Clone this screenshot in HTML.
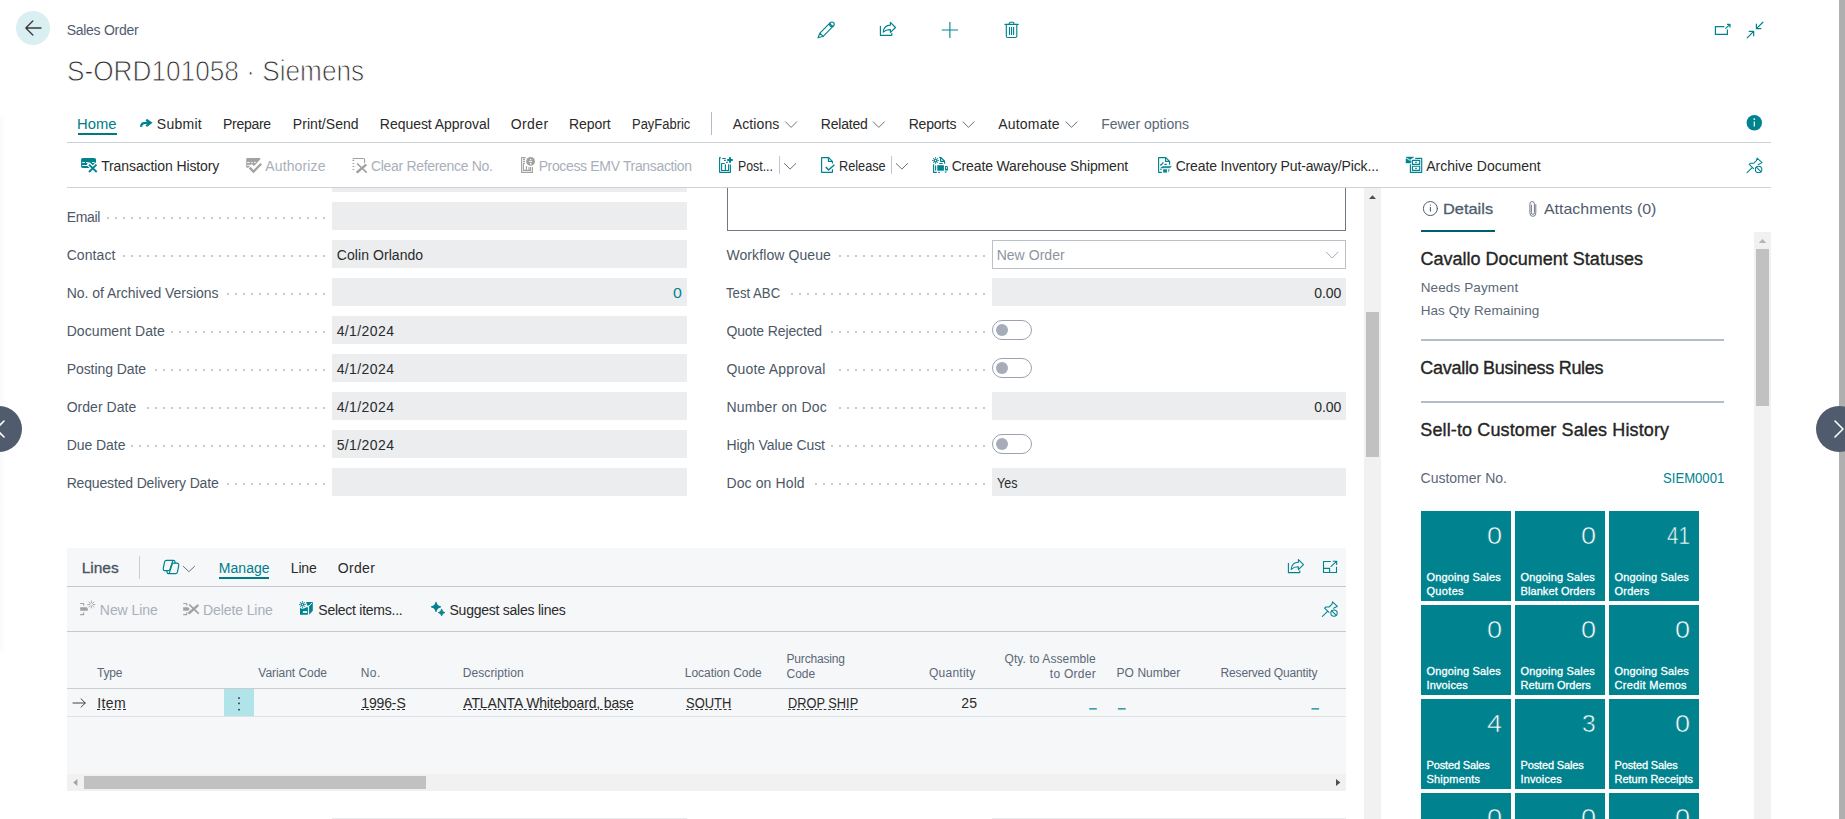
<!DOCTYPE html>
<html lang="en"><head><meta charset="utf-8"><title>S-ORD101058 · Siemens - Sales Order</title>
<style>
html,body{margin:0;padding:0;background:#fff;}
body{width:1845px;height:819px;position:relative;overflow:hidden;font-family:'Liberation Sans', sans-serif;}
.t{position:absolute;white-space:nowrap;}
.b{position:absolute;}
.tile{position:absolute;width:90px;height:90px;background:#00838f;}
.dots{background-image:linear-gradient(to left,#c7cad2 2px,transparent 2px);background-size:8px 2px;background-position:right top;}
svg.ov{position:absolute;left:0;top:0;}
</style></head>
<body>
<div class="b" style="left:1839px;top:0px;width:6px;height:819px;background:#aeafae;"></div>
<div class="b" style="left:0px;top:117px;width:5px;height:535px;background:#fff;background:linear-gradient(to right,#fafafa,#fefefe);"></div>
<div class="b" style="left:16px;top:11px;width:34px;height:34px;background:#d9eff2;border-radius:50%;"></div>
<div class="b" style="left:67px;top:142px;width:1704px;height:1px;background:#c9d3d8;"></div>
<div class="b" style="left:67px;top:187px;width:1704px;height:1px;background:#cfd3d8;"></div>
<div class="b" style="left:711.2px;top:112px;width:1px;height:23px;background:#b4bbc6;"></div>
<div class="b" style="left:78px;top:133px;width:38.5px;height:2px;background:#007987;"></div>
<div class="b" style="left:778.5px;top:156px;width:1px;height:18px;background:#c4c8ce;"></div>
<div class="b" style="left:890.5px;top:156px;width:1px;height:18px;background:#c4c8ce;"></div>
<div class="b" style="left:332px;top:188px;width:355px;height:4px;background:#ecedef;"></div>
<div class="b" style="left:332px;top:202px;width:355px;height:28.3px;background:#ecedef;"></div>
<div class="b" style="left:332px;top:240px;width:355px;height:28.3px;background:#ecedef;"></div>
<div class="b" style="left:332px;top:278px;width:355px;height:28.3px;background:#ecedef;"></div>
<div class="b" style="left:332px;top:316px;width:355px;height:28.3px;background:#ecedef;"></div>
<div class="b" style="left:332px;top:354px;width:355px;height:28.3px;background:#ecedef;"></div>
<div class="b" style="left:332px;top:392px;width:355px;height:28.3px;background:#ecedef;"></div>
<div class="b" style="left:332px;top:430px;width:355px;height:28.3px;background:#ecedef;"></div>
<div class="b" style="left:332px;top:468px;width:355px;height:28.3px;background:#ecedef;"></div>
<div class="b" style="left:992px;top:278px;width:354px;height:28.3px;background:#ecedef;"></div>
<div class="b" style="left:992px;top:392px;width:354px;height:28.3px;background:#ecedef;"></div>
<div class="b" style="left:992px;top:468px;width:354px;height:28.3px;background:#ecedef;"></div>
<div class="b" style="left:727px;top:188px;width:619px;height:42.5px;background:#fff;border:1px solid #6f7785;border-top:none;box-sizing:border-box;"></div>
<div class="b" style="left:992px;top:240px;width:354px;height:28.5px;background:#fff;border:1px solid #bcc1c9;box-sizing:border-box;"></div>
<div class="b" style="left:992px;top:320px;width:40px;height:20px;background:#fff;border:1px solid #9aa2af;border-radius:10px;box-sizing:border-box;"></div>
<div class="b" style="left:996px;top:324px;width:12px;height:12px;background:#a6acb9;border-radius:50%;"></div>
<div class="b" style="left:992px;top:358px;width:40px;height:20px;background:#fff;border:1px solid #9aa2af;border-radius:10px;box-sizing:border-box;"></div>
<div class="b" style="left:996px;top:362px;width:12px;height:12px;background:#a6acb9;border-radius:50%;"></div>
<div class="b" style="left:992px;top:434px;width:40px;height:20px;background:#fff;border:1px solid #9aa2af;border-radius:10px;box-sizing:border-box;"></div>
<div class="b" style="left:996px;top:438px;width:12px;height:12px;background:#a6acb9;border-radius:50%;"></div>
<div class="b" style="left:332px;top:818px;width:355px;height:1px;background:#e9eaec;"></div>
<div class="b" style="left:992px;top:818px;width:354px;height:1px;background:#e9eaec;"></div>
<div class="b dots" style="left:107px;top:217px;width:218px;height:2px"></div>
<div class="b dots" style="left:123px;top:255px;width:202px;height:2px"></div>
<div class="b dots" style="left:227px;top:293px;width:98px;height:2px"></div>
<div class="b dots" style="left:171px;top:331px;width:154px;height:2px"></div>
<div class="b dots" style="left:155px;top:369px;width:170px;height:2px"></div>
<div class="b dots" style="left:147px;top:407px;width:178px;height:2px"></div>
<div class="b dots" style="left:131px;top:445px;width:194px;height:2px"></div>
<div class="b dots" style="left:227px;top:483px;width:98px;height:2px"></div>
<div class="b dots" style="left:839px;top:255px;width:146px;height:2px"></div>
<div class="b dots" style="left:791px;top:293px;width:194px;height:2px"></div>
<div class="b dots" style="left:831px;top:331px;width:154px;height:2px"></div>
<div class="b dots" style="left:839px;top:369px;width:146px;height:2px"></div>
<div class="b dots" style="left:839px;top:407px;width:146px;height:2px"></div>
<div class="b dots" style="left:831px;top:445px;width:154px;height:2px"></div>
<div class="b dots" style="left:815px;top:483px;width:170px;height:2px"></div>
<div class="b" style="left:1364px;top:188px;width:17px;height:631px;background:#f1f1f1;"></div>
<div class="b" style="left:1366px;top:312px;width:13px;height:145px;background:#c1c1c1;"></div>
<div class="b" style="left:67px;top:548px;width:1279px;height:243px;background:#f5f7f9;"></div>
<div class="b" style="left:139px;top:556px;width:1px;height:23px;background:#c8ccd3;"></div>
<div class="b" style="left:219px;top:577px;width:50px;height:2px;background:#007987;"></div>
<div class="b" style="left:67px;top:586px;width:1279px;height:1px;background:#c5c9cf;"></div>
<div class="b" style="left:67px;top:631px;width:1279px;height:1px;background:#c5c9cf;"></div>
<div class="b" style="left:67px;top:688px;width:1279px;height:1px;background:#c9cdd2;"></div>
<div class="b" style="left:67px;top:716px;width:1279px;height:1px;background:#dfe2e6;"></div>
<div class="b" style="left:224px;top:689px;width:30px;height:27px;background:#b1e4e9;"></div>
<div class="b" style="left:67px;top:774px;width:1279px;height:17px;background:#f1f1f1;"></div>
<div class="b" style="left:84px;top:776px;width:342px;height:13px;background:#c1c1c1;"></div>
<div class="b" style="left:1421px;top:230px;width:74px;height:2px;background:#005f6b;"></div>
<div class="b" style="left:1754px;top:232px;width:17px;height:587px;background:#f1f1f1;"></div>
<div class="b" style="left:1756px;top:249px;width:13px;height:157px;background:#c1c1c1;"></div>
<div class="b" style="left:1421px;top:339px;width:303px;height:2px;background:#b3bcc7;"></div>
<div class="b" style="left:1421px;top:401px;width:303px;height:2px;background:#b3bcc7;"></div>
<div class="b" style="left:-24px;top:406px;width:46px;height:46px;background:#505c6d;border-radius:50%;"></div>
<div class="b" style="left:1816px;top:406px;width:46px;height:46px;background:#505c6d;border-radius:50%;"></div>
<div class="tile" style="left:1421px;top:511px"></div>
<div class="tile" style="left:1515px;top:511px"></div>
<div class="tile" style="left:1609px;top:511px"></div>
<div class="tile" style="left:1421px;top:605px"></div>
<div class="tile" style="left:1515px;top:605px"></div>
<div class="tile" style="left:1609px;top:605px"></div>
<div class="tile" style="left:1421px;top:699px"></div>
<div class="tile" style="left:1515px;top:699px"></div>
<div class="tile" style="left:1609px;top:699px"></div>
<div class="tile" style="left:1421px;top:793px"></div>
<div class="tile" style="left:1515px;top:793px"></div>
<div class="tile" style="left:1609px;top:793px"></div>
<span class="t" style="left:66.63px;top:19.80px;font-size:14px;line-height:20px;color:#505c6d;letter-spacing:-0.276px;">Sales Order</span>
<span class="t" style="left:66.86px;top:53.00px;font-size:29px;line-height:36px;color:#303030;-webkit-text-stroke:0.9px #fff;transform:scaleX(0.9038);transform-origin:0 0;">S-ORD101058 · Siemens</span>
<span class="t" style="left:77.39px;top:114.20px;font-size:14px;line-height:20px;color:#007d8a;transform:scaleX(1.0553);transform-origin:0 0;">Home</span>
<span class="t" style="left:156.83px;top:114.20px;font-size:14px;line-height:20px;color:#2a2a2a;letter-spacing:0.272px;">Submit</span>
<span class="t" style="left:223.03px;top:114.20px;font-size:14px;line-height:20px;color:#2a2a2a;letter-spacing:-0.279px;">Prepare</span>
<span class="t" style="left:292.83px;top:114.20px;font-size:14px;line-height:20px;color:#2a2a2a;letter-spacing:0.041px;">Print/Send</span>
<span class="t" style="left:379.83px;top:114.20px;font-size:14px;line-height:20px;color:#2a2a2a;letter-spacing:-0.039px;">Request Approval</span>
<span class="t" style="left:510.83px;top:114.20px;font-size:14px;line-height:20px;color:#2a2a2a;letter-spacing:0.361px;">Order</span>
<span class="t" style="left:568.93px;top:114.20px;font-size:14px;line-height:20px;color:#2a2a2a;letter-spacing:-0.038px;">Report</span>
<span class="t" style="left:632.09px;top:114.20px;font-size:14px;line-height:20px;color:#2a2a2a;transform:scaleX(0.9253);transform-origin:0 0;">PayFabric</span>
<span class="t" style="left:732.83px;top:114.20px;font-size:14px;line-height:20px;color:#2a2a2a;letter-spacing:0.086px;">Actions</span>
<span class="t" style="left:820.83px;top:114.20px;font-size:14px;line-height:20px;color:#2a2a2a;letter-spacing:-0.221px;">Related</span>
<span class="t" style="left:908.63px;top:114.20px;font-size:14px;line-height:20px;color:#2a2a2a;letter-spacing:-0.182px;">Reports</span>
<span class="t" style="left:998.23px;top:114.20px;font-size:14px;line-height:20px;color:#2a2a2a;letter-spacing:0.200px;">Automate</span>
<span class="t" style="left:1101.23px;top:114.20px;font-size:14px;line-height:20px;color:#5b6776;letter-spacing:-0.016px;">Fewer options</span>
<span class="t" style="left:101.13px;top:156.00px;font-size:14px;line-height:20px;color:#2a2a2a;letter-spacing:-0.102px;">Transaction History</span>
<span class="t" style="left:265.23px;top:156.00px;font-size:14px;line-height:20px;color:#a9afba;letter-spacing:0.148px;">Authorize</span>
<span class="t" style="left:370.93px;top:156.00px;font-size:14px;line-height:20px;color:#a9afba;letter-spacing:-0.310px;">Clear Reference No.</span>
<span class="t" style="left:538.63px;top:156.00px;font-size:14px;line-height:20px;color:#a9afba;letter-spacing:-0.346px;">Process EMV Transaction</span>
<span class="t" style="left:737.52px;top:156.00px;font-size:14px;line-height:20px;color:#2a2a2a;transform:scaleX(0.8808);transform-origin:0 0;">Post...</span>
<span class="t" style="left:838.50px;top:156.00px;font-size:14px;line-height:20px;color:#2a2a2a;transform:scaleX(0.9090);transform-origin:0 0;">Release</span>
<span class="t" style="left:951.63px;top:156.00px;font-size:14px;line-height:20px;color:#2a2a2a;letter-spacing:-0.141px;">Create Warehouse Shipment</span>
<span class="t" style="left:1175.63px;top:156.00px;font-size:14px;line-height:20px;color:#2a2a2a;letter-spacing:-0.141px;">Create Inventory Put-away/Pick...</span>
<span class="t" style="left:1426.13px;top:156.00px;font-size:14px;line-height:20px;color:#2a2a2a;letter-spacing:0.010px;">Archive Document</span>
<span class="t" style="left:66.63px;top:207.00px;font-size:14px;line-height:20px;color:#4c5866;letter-spacing:-0.319px;">Email</span>
<span class="t" style="left:66.63px;top:245.00px;font-size:14px;line-height:20px;color:#4c5866;letter-spacing:0.098px;">Contact</span>
<span class="t" style="left:66.63px;top:283.00px;font-size:14px;line-height:20px;color:#4c5866;letter-spacing:-0.026px;">No. of Archived Versions</span>
<span class="t" style="left:66.63px;top:321.00px;font-size:14px;line-height:20px;color:#4c5866;letter-spacing:0.080px;">Document Date</span>
<span class="t" style="left:66.63px;top:359.00px;font-size:14px;line-height:20px;color:#4c5866;letter-spacing:-0.057px;">Posting Date</span>
<span class="t" style="left:66.63px;top:397.00px;font-size:14px;line-height:20px;color:#4c5866;letter-spacing:0.043px;">Order Date</span>
<span class="t" style="left:66.63px;top:435.00px;font-size:14px;line-height:20px;color:#4c5866;letter-spacing:-0.045px;">Due Date</span>
<span class="t" style="left:66.63px;top:473.00px;font-size:14px;line-height:20px;color:#4c5866;letter-spacing:-0.159px;">Requested Delivery Date</span>
<span class="t" style="left:726.43px;top:245.00px;font-size:14px;line-height:20px;color:#4c5866;letter-spacing:0.093px;">Workflow Queue</span>
<span class="t" style="left:726.48px;top:283.00px;font-size:14px;line-height:20px;color:#4c5866;transform:scaleX(0.9402);transform-origin:0 0;">Test ABC</span>
<span class="t" style="left:726.43px;top:321.00px;font-size:14px;line-height:20px;color:#4c5866;letter-spacing:-0.120px;">Quote Rejected</span>
<span class="t" style="left:726.43px;top:359.00px;font-size:14px;line-height:20px;color:#4c5866;letter-spacing:0.194px;">Quote Approval</span>
<span class="t" style="left:726.43px;top:397.00px;font-size:14px;line-height:20px;color:#4c5866;letter-spacing:0.183px;">Number on Doc</span>
<span class="t" style="left:726.43px;top:435.00px;font-size:14px;line-height:20px;color:#4c5866;letter-spacing:-0.114px;">High Value Cust</span>
<span class="t" style="left:726.43px;top:473.00px;font-size:14px;line-height:20px;color:#4c5866;letter-spacing:0.119px;">Doc on Hold</span>
<span class="t" style="left:336.83px;top:245.00px;font-size:14px;line-height:20px;color:#2a2a2a;letter-spacing:0.061px;">Colin Orlando</span>
<span class="t" style="left:672.63px;top:283.00px;font-size:14px;line-height:20px;color:#00838f;transform:scaleX(1.1348);transform-origin:0 0;">0</span>
<span class="t" style="left:336.63px;top:321.00px;font-size:14px;line-height:20px;color:#2a2a2a;letter-spacing:0.406px;">4/1/2024</span>
<span class="t" style="left:336.63px;top:359.00px;font-size:14px;line-height:20px;color:#2a2a2a;letter-spacing:0.406px;">4/1/2024</span>
<span class="t" style="left:336.63px;top:397.00px;font-size:14px;line-height:20px;color:#2a2a2a;letter-spacing:0.406px;">4/1/2024</span>
<span class="t" style="left:336.63px;top:435.00px;font-size:14px;line-height:20px;color:#2a2a2a;letter-spacing:0.406px;">5/1/2024</span>
<span class="t" style="left:996.63px;top:245.00px;font-size:14px;line-height:20px;color:#8e949e;letter-spacing:0.044px;">New Order</span>
<span class="t" style="left:1314.33px;top:283.00px;font-size:14px;line-height:20px;color:#2a2a2a;letter-spacing:-0.137px;">0.00</span>
<span class="t" style="left:1314.33px;top:397.00px;font-size:14px;line-height:20px;color:#2a2a2a;letter-spacing:-0.137px;">0.00</span>
<span class="t" style="left:996.51px;top:473.00px;font-size:14px;line-height:20px;color:#2a2a2a;transform:scaleX(0.8919);transform-origin:0 0;">Yes</span>
<span class="t" style="left:81.75px;top:557.70px;font-size:15.5px;line-height:20px;color:#4a5361;-webkit-text-stroke:0.3px #4a5361;letter-spacing:-0.039px;">Lines</span>
<span class="t" style="left:218.83px;top:558.20px;font-size:14px;line-height:20px;color:#007d8a;letter-spacing:0.029px;">Manage</span>
<span class="t" style="left:290.83px;top:558.20px;font-size:14px;line-height:20px;color:#2a2a2a;letter-spacing:-0.176px;">Line</span>
<span class="t" style="left:337.63px;top:558.20px;font-size:14px;line-height:20px;color:#2a2a2a;letter-spacing:0.361px;">Order</span>
<span class="t" style="left:99.83px;top:599.80px;font-size:14px;line-height:20px;color:#a9afba;letter-spacing:-0.062px;">New Line</span>
<span class="t" style="left:203.03px;top:599.80px;font-size:14px;line-height:20px;color:#a9afba;letter-spacing:-0.099px;">Delete Line</span>
<span class="t" style="left:318.33px;top:599.80px;font-size:14px;line-height:20px;color:#2a2a2a;letter-spacing:-0.256px;">Select items...</span>
<span class="t" style="left:449.53px;top:599.80px;font-size:14px;line-height:20px;color:#2a2a2a;letter-spacing:-0.244px;">Suggest sales lines</span>
<span class="t" style="left:97.04px;top:662.80px;font-size:12px;line-height:20px;color:#5b6776;letter-spacing:-0.232px;">Type</span>
<span class="t" style="left:258.34px;top:662.80px;font-size:12px;line-height:20px;color:#5b6776;letter-spacing:-0.049px;">Variant Code</span>
<span class="t" style="left:360.84px;top:662.80px;font-size:12px;line-height:20px;color:#5b6776;letter-spacing:0.366px;">No.</span>
<span class="t" style="left:462.74px;top:662.80px;font-size:12px;line-height:20px;color:#5b6776;letter-spacing:0.089px;">Description</span>
<span class="t" style="left:684.74px;top:662.80px;font-size:12px;line-height:20px;color:#5b6776;letter-spacing:-0.031px;">Location Code</span>
<span class="t" style="left:786.54px;top:649.00px;font-size:12px;line-height:20px;color:#5b6776;letter-spacing:-0.170px;">Purchasing</span>
<span class="t" style="left:786.54px;top:664.40px;font-size:12px;line-height:20px;color:#5b6776;letter-spacing:-0.022px;">Code</span>
<span class="t" style="left:929.04px;top:662.80px;font-size:12px;line-height:20px;color:#5b6776;letter-spacing:0.231px;">Quantity</span>
<span class="t" style="left:1004.54px;top:649.00px;font-size:12px;line-height:20px;color:#5b6776;letter-spacing:0.087px;">Qty. to Assemble</span>
<span class="t" style="left:1049.84px;top:664.40px;font-size:12px;line-height:20px;color:#5b6776;letter-spacing:0.258px;">to Order</span>
<span class="t" style="left:1116.54px;top:662.80px;font-size:12px;line-height:20px;color:#5b6776;letter-spacing:0.058px;">PO Number</span>
<span class="t" style="left:1220.54px;top:662.80px;font-size:12px;line-height:20px;color:#5b6776;letter-spacing:-0.154px;">Reserved Quantity</span>
<span class="t" style="left:97.23px;top:692.90px;font-size:14px;line-height:20px;color:#2a2a2a;text-decoration:underline dashed;text-decoration-thickness:1px;text-underline-offset:1px;letter-spacing:0.435px;">Item</span>
<span class="t" style="left:361.23px;top:692.90px;font-size:14px;line-height:20px;color:#2a2a2a;text-decoration:underline dashed;text-decoration-thickness:1px;text-underline-offset:1px;letter-spacing:-0.123px;">1996-S</span>
<span class="t" style="left:463.23px;top:692.90px;font-size:14px;line-height:20px;color:#2a2a2a;text-decoration:underline dashed;text-decoration-thickness:1px;text-underline-offset:1px;letter-spacing:-0.142px;">ATLANTA Whiteboard, base</span>
<span class="t" style="left:685.59px;top:692.90px;font-size:14px;line-height:20px;color:#2a2a2a;text-decoration:underline dashed;text-decoration-thickness:1px;text-underline-offset:1px;transform:scaleX(0.9250);transform-origin:0 0;">SOUTH</span>
<span class="t" style="left:787.50px;top:692.90px;font-size:14px;line-height:20px;color:#2a2a2a;text-decoration:underline dashed;text-decoration-thickness:1px;text-underline-offset:1px;transform:scaleX(0.9146);transform-origin:0 0;">DROP SHIP</span>
<span class="t" style="left:961.33px;top:692.90px;font-size:14px;line-height:20px;color:#2a2a2a;letter-spacing:0.062px;">25</span>
<span class="t" style="left:1442.80px;top:199.20px;font-size:15px;line-height:20px;color:#505c6d;-webkit-text-stroke:0.3px #505c6d;transform:scaleX(1.0925);transform-origin:0 0;">Details</span>
<span class="t" style="left:1543.92px;top:199.20px;font-size:15px;line-height:20px;color:#505c6d;transform:scaleX(1.0612);transform-origin:0 0;">Attachments (0)</span>
<span class="t" style="left:1420.41px;top:246.60px;font-size:18px;line-height:24px;color:#252525;-webkit-text-stroke:0.35px #252525;letter-spacing:0.020px;">Cavallo Document Statuses</span>
<span class="t" style="left:1420.66px;top:277.50px;font-size:13.5px;line-height:20px;color:#5c6878;letter-spacing:0.119px;">Needs Payment</span>
<span class="t" style="left:1420.66px;top:300.50px;font-size:13.5px;line-height:20px;color:#5c6878;letter-spacing:0.102px;">Has Qty Remaining</span>
<span class="t" style="left:1420.31px;top:355.80px;font-size:18px;line-height:24px;color:#252525;-webkit-text-stroke:0.35px #252525;letter-spacing:-0.277px;">Cavallo Business Rules</span>
<span class="t" style="left:1420.31px;top:417.80px;font-size:18px;line-height:24px;color:#252525;-webkit-text-stroke:0.35px #252525;letter-spacing:0.128px;">Sell-to Customer Sales History</span>
<span class="t" style="left:1420.53px;top:468.30px;font-size:14px;line-height:20px;color:#5c6878;letter-spacing:0.007px;">Customer No.</span>
<span class="t" style="left:1662.58px;top:468.30px;font-size:14px;line-height:20px;color:#00838f;transform:scaleX(0.9368);transform-origin:0 0;">SIEM0001</span>
<span class="t" style="left:1487.21px;top:522.10px;font-size:23.5px;line-height:28px;color:#fff;-webkit-text-stroke:0.55px #00838f;transform:scaleX(1.1531);transform-origin:0 0;">0</span>
<span class="t" style="left:1426.49px;top:570.20px;font-size:11px;line-height:14px;color:#fff;-webkit-text-stroke:0.3px #fff;letter-spacing:0.178px;">Ongoing Sales</span>
<span class="t" style="left:1426.49px;top:584.20px;font-size:11px;line-height:14px;color:#fff;-webkit-text-stroke:0.3px #fff;letter-spacing:0.328px;">Quotes</span>
<span class="t" style="left:1581.21px;top:522.10px;font-size:23.5px;line-height:28px;color:#fff;-webkit-text-stroke:0.55px #00838f;transform:scaleX(1.1531);transform-origin:0 0;">0</span>
<span class="t" style="left:1520.49px;top:570.20px;font-size:11px;line-height:14px;color:#fff;-webkit-text-stroke:0.3px #fff;letter-spacing:0.178px;">Ongoing Sales</span>
<span class="t" style="left:1520.49px;top:584.20px;font-size:11px;line-height:14px;color:#fff;-webkit-text-stroke:0.3px #fff;letter-spacing:0.087px;">Blanket Orders</span>
<span class="t" style="left:1666.96px;top:522.10px;font-size:23.5px;line-height:28px;color:#fff;-webkit-text-stroke:0.55px #00838f;transform:scaleX(0.8788);transform-origin:0 0;">41</span>
<span class="t" style="left:1614.49px;top:570.20px;font-size:11px;line-height:14px;color:#fff;-webkit-text-stroke:0.3px #fff;letter-spacing:0.178px;">Ongoing Sales</span>
<span class="t" style="left:1614.49px;top:584.20px;font-size:11px;line-height:14px;color:#fff;-webkit-text-stroke:0.3px #fff;letter-spacing:0.217px;">Orders</span>
<span class="t" style="left:1487.21px;top:616.10px;font-size:23.5px;line-height:28px;color:#fff;-webkit-text-stroke:0.55px #00838f;transform:scaleX(1.1531);transform-origin:0 0;">0</span>
<span class="t" style="left:1426.49px;top:664.20px;font-size:11px;line-height:14px;color:#fff;-webkit-text-stroke:0.3px #fff;letter-spacing:0.178px;">Ongoing Sales</span>
<span class="t" style="left:1426.49px;top:678.20px;font-size:11px;line-height:14px;color:#fff;-webkit-text-stroke:0.3px #fff;letter-spacing:0.136px;">Invoices</span>
<span class="t" style="left:1581.21px;top:616.10px;font-size:23.5px;line-height:28px;color:#fff;-webkit-text-stroke:0.55px #00838f;transform:scaleX(1.1531);transform-origin:0 0;">0</span>
<span class="t" style="left:1520.49px;top:664.20px;font-size:11px;line-height:14px;color:#fff;-webkit-text-stroke:0.3px #fff;letter-spacing:0.178px;">Ongoing Sales</span>
<span class="t" style="left:1520.49px;top:678.20px;font-size:11px;line-height:14px;color:#fff;-webkit-text-stroke:0.3px #fff;letter-spacing:0.051px;">Return Orders</span>
<span class="t" style="left:1675.21px;top:616.10px;font-size:23.5px;line-height:28px;color:#fff;-webkit-text-stroke:0.55px #00838f;transform:scaleX(1.1531);transform-origin:0 0;">0</span>
<span class="t" style="left:1614.49px;top:664.20px;font-size:11px;line-height:14px;color:#fff;-webkit-text-stroke:0.3px #fff;letter-spacing:0.178px;">Ongoing Sales</span>
<span class="t" style="left:1614.49px;top:678.20px;font-size:11px;line-height:14px;color:#fff;-webkit-text-stroke:0.3px #fff;letter-spacing:0.331px;">Credit Memos</span>
<span class="t" style="left:1487.21px;top:710.10px;font-size:23.5px;line-height:28px;color:#fff;-webkit-text-stroke:0.55px #00838f;transform:scaleX(1.1531);transform-origin:0 0;">4</span>
<span class="t" style="left:1426.49px;top:758.20px;font-size:11px;line-height:14px;color:#fff;-webkit-text-stroke:0.3px #fff;letter-spacing:-0.138px;">Posted Sales</span>
<span class="t" style="left:1426.49px;top:772.20px;font-size:11px;line-height:14px;color:#fff;-webkit-text-stroke:0.3px #fff;letter-spacing:0.203px;">Shipments</span>
<span class="t" style="left:1582.45px;top:710.10px;font-size:23.5px;line-height:28px;color:#fff;-webkit-text-stroke:0.55px #00838f;transform:scaleX(1.0483);transform-origin:0 0;">3</span>
<span class="t" style="left:1520.49px;top:758.20px;font-size:11px;line-height:14px;color:#fff;-webkit-text-stroke:0.3px #fff;letter-spacing:-0.138px;">Posted Sales</span>
<span class="t" style="left:1520.49px;top:772.20px;font-size:11px;line-height:14px;color:#fff;-webkit-text-stroke:0.3px #fff;letter-spacing:0.136px;">Invoices</span>
<span class="t" style="left:1675.21px;top:710.10px;font-size:23.5px;line-height:28px;color:#fff;-webkit-text-stroke:0.55px #00838f;transform:scaleX(1.1531);transform-origin:0 0;">0</span>
<span class="t" style="left:1614.49px;top:758.20px;font-size:11px;line-height:14px;color:#fff;-webkit-text-stroke:0.3px #fff;letter-spacing:-0.138px;">Posted Sales</span>
<span class="t" style="left:1614.49px;top:772.20px;font-size:11px;line-height:14px;color:#fff;-webkit-text-stroke:0.3px #fff;letter-spacing:-0.019px;">Return Receipts</span>
<span class="t" style="left:1487.21px;top:804.10px;font-size:23.5px;line-height:28px;color:#fff;-webkit-text-stroke:0.55px #00838f;transform:scaleX(1.1531);transform-origin:0 0;">0</span>
<span class="t" style="left:1581.21px;top:804.10px;font-size:23.5px;line-height:28px;color:#fff;-webkit-text-stroke:0.55px #00838f;transform:scaleX(1.1531);transform-origin:0 0;">0</span>
<span class="t" style="left:1675.21px;top:804.10px;font-size:23.5px;line-height:28px;color:#fff;-webkit-text-stroke:0.55px #00838f;transform:scaleX(1.1531);transform-origin:0 0;">0</span>
<svg class="ov" width="1845" height="819" viewBox="0 0 1845 819" fill="none" stroke-linecap="round" stroke-linejoin="round">
<!-- back arrow -->
<path d="M41 28H25.8M32.8 21l-7 7 7 7" stroke="#3a3a3a" stroke-width="1.3"/>
<!-- nav chevrons -->
<path d="M4 421l-8 8 8 8" stroke="#fff" stroke-width="1.6"/>
<path d="M1835 421l8 8-8 8" stroke="#fff" stroke-width="1.6"/>
<!-- top center icons -->
<g stroke="#00838f" stroke-width="1.15">
 <!-- pencil -->
 <path d="M819.9 33.1L829.8 23.2M823.2 36.3L832.9 26.4M819.9 33.1L818 37.8L823.2 36.3M819.9 33.1L823.2 36.3M829.6 23.4L832.8 26.6"/>
 <circle cx="831.9" cy="24.3" r="2.3"/>
 <!-- share -->
 <path d="M880.4 26.2V35.3H891.8V33.4"/>
 <path d="M883.2 32.2C883.6 27.6 886.6 25.3 890.4 25.1V22.4L895.5 27.5L890.4 32.4V29.6C887.4 29.5 885.2 30.2 883.2 32.2Z"/>
 <!-- plus -->
 <path d="M941.8 30H958M949.9 22V38" stroke-width="1.1" stroke-linecap="butt"/>
 <!-- trash -->
 <path d="M1005 24.4H1018.2M1009.3 24.4V23.2Q1009.3 22.2 1010.3 22.2H1012.9Q1013.9 22.2 1013.9 23.2V24.4M1006.3 24.4V36Q1006.3 37.5 1007.8 37.5H1015.3Q1016.8 37.5 1016.8 36V24.4M1009.5 27.2V34.6M1011.55 27.2V34.6M1013.6 27.2V34.6"/>
 <!-- popout -->
 <path d="M1724.4 26.6H1715.4V34.4H1727.4V29.6M1725.4 28.6L1729.8 24.6M1727 24.4H1730V27.4" stroke-width="1.2" stroke-linecap="butt"/>
 <!-- collapse -->
 <path d="M1762.9 22.2L1756.4 28.6M1756.4 24.2V28.7H1760.8M1747.2 37.8L1753.6 31.4M1749.2 31.3H1753.7V35.8" stroke-width="1.2"/>
</g>
<!-- info filled -->
<circle cx="1754.3" cy="122.7" r="7.7" fill="#00838f"/>
<path d="M1754.3 121.6V126.4" stroke="#fff" stroke-width="1.2" stroke-linecap="butt"/>
<circle cx="1754.3" cy="119.1" r="0.95" fill="#fff"/>
<!-- submit arrow -->
<path d="M141.2 126.9C141 123.9 142.8 122.9 146 122.9H150" stroke="#00838f" stroke-width="2.3" stroke-linecap="butt"/>
<path d="M146.2 119.8L150.6 122.9L146.2 126.2" stroke="#00838f" stroke-width="2.3" stroke-linecap="butt" stroke-linejoin="miter"/>
<!-- menu chevrons -->
<g stroke="#6b7380" stroke-width="1">
 <path d="M785.5 121.8l5.6 5.6 5.6-5.6M873.2 121.8l5.6 5.6 5.6-5.6M962.9 121.8l5.6 5.6 5.6-5.6M1065.9 121.8l5.6 5.6 5.6-5.6"/>
 <path d="M784.4 163.5l5.7 5.6 5.7-5.6M896.2 163.5l5.7 5.6 5.7-5.6"/>
 <path d="M183.2 566.3l5.7 5.4 5.7-5.4"/>
</g>
<path d="M1326.4 252.2l5.8 5.8 5.8-5.8" stroke="#a3aab4" stroke-width="1"/>
<!-- Transaction History -->
<g>
 <rect x="81.1" y="158" width="14.9" height="9.9" rx="1.6" fill="#00838f"/>
 <path d="M82.3 162.5H84.8M86 162.5H87.8M92 162.5H94.6M82.3 165.5H88" stroke="#fff" stroke-width="1" stroke-linecap="butt"/>
 <path d="M89 164.6L96.7 172M96.5 164.6L89 172" stroke="#fff" stroke-width="4.2"/>
 <path d="M89 164.6L96.7 172M96.5 164.6L89 172" stroke="#00838f" stroke-width="1.9" stroke-linecap="butt"/>
</g>
<!-- Authorize (disabled) -->
<g>
 <path d="M247.5 158H259.6Q261.2 158 260.2 159.2L256.5 163.6L254 166L251.8 164L248.6 167.4Q246.2 168.2 246.2 166.4V159.4Q246.2 158 247.5 158Z" fill="#a2a2a2"/>
 <path d="M247.2 162.4H249.8M251.2 162.4H252.8M254.2 162.4H255.8M247.2 165.3H252" stroke="#fff" stroke-width="1" stroke-linecap="butt"/>
 <path d="M249.6 167.6L253.5 171.6L261.2 163.8" stroke="#a2a2a2" stroke-width="2.3" stroke-linecap="butt" stroke-linejoin="miter"/>
</g>
<!-- Clear Reference (disabled) -->
<g stroke="#a2a2a2">
 <path d="M353.2 159V158.5H363.6Q364.6 158.5 364.6 159.5V162.8" stroke-width="1.1"/>
 <path d="M353.4 160V172" stroke-width="1.8" stroke-dasharray="1 2" stroke-linecap="butt"/>
 <path d="M357.6 164L366.2 172.2" stroke-width="1.7"/>
 <path d="M365.6 165.2L357.4 172" stroke-width="2.4"/>
</g>
<!-- Process EMV (disabled) -->
<g stroke="#a2a2a2" stroke-width="1.1" stroke-linecap="butt">
 <path d="M525.6 157.6H521.6V172.4H532.4V167"/>
 <path d="M523 159.4H525M523 161.4H525M524.8 163.4H523.4V170.4H530.6V167M526.4 166V170.4M529 167V170.4"/>
 <circle cx="530.6" cy="161.4" r="4.4" fill="#a2a2a2" stroke="none"/>
 <path d="M529.2 161.4H532" stroke="#fff" stroke-width="1"/>
 <path d="M530.6 163V164.6M530.6 158.9V160" stroke="#fff" stroke-width="1.3"/>
</g>
<!-- Post -->
<g stroke="#00838f" stroke-width="1.15" stroke-linecap="butt">
 <path d="M720.8 157.6H719.6V172.3H730.4V164.4"/>
 <path d="M722.2 158.5H725.8M724 160.4H725.8M726 162.4H727.8"/>
 <path d="M724.8 163.5H721.6V170.5H728.6V164.2M725.4 164.2V170.5"/>
 <path d="M727.2 160H732.8M730 157.2V162.8" stroke-width="2"/>
</g>
<!-- Release -->
<g stroke="#00838f" stroke-width="1.15" stroke-linecap="butt">
 <path d="M832.4 163.6V161.3L828.6 157.6H821.6V172.3H832.4V169.3"/>
 <path d="M828.4 157.8V161.4H832.2"/>
 <path d="M825.8 167L828.6 170L834.4 164.8" stroke-width="1.5"/>
</g>
<!-- Create Warehouse Shipment -->
<g stroke="#00838f" stroke-width="1.15" stroke-linecap="butt">
 <circle cx="935.5" cy="160.5" r="1.3"/>
 <path d="M935.5 157.2V158.6M935.5 162.4V163.8M932.2 160.5H933.6M937.4 160.5H938.8M933.3 158.3L934 159M937 162L937.7 162.7M933.3 162.7L934 162M937 159L937.7 158.3"/>
 <path d="M939.2 157.5H940.8L944.6 161.2V163.8M940.6 157.8V161.4H944.4M939.2 163.5H942.8"/>
 <path d="M933.6 164.2V172.4H936.8M938.2 172.4H939.8M935.6 165.4V170.6"/>
 <rect x="937.3" y="165.2" width="6.6" height="5.5" fill="#00838f" stroke="none"/>
 <path d="M945 166H946.6Q947.9 166 947.9 167.4V170.4H945Z" fill="#00838f" stroke="none"/>
 <rect x="945.9" y="167" width="0.9" height="1.8" fill="#fff" stroke="none"/>
 <path d="M944.2 171.4H947L945.6 173Z" fill="#00838f" stroke="none"/>
</g>
<!-- Create Inventory Put-away -->
<g stroke="#00838f" stroke-width="1.15" stroke-linecap="butt">
 <path d="M1169.6 164.8V161.3L1165.8 157.6H1158.6V172.3H1161.9"/>
 <path d="M1165.6 157.8V161.4H1169.4"/>
 <path d="M1160.3 165.4L1161.4 164.6L1163.4 162.4M1164.4 164.3H1166.8" stroke-width="1.3"/>
 <path d="M1160.6 168L1163 166.4H1171.4L1169.8 167.8H1164.2Z" fill="#00838f" stroke-width="0.6"/>
 <path d="M1160.3 169.2L1161.6 169.6" stroke-width="1.2"/>
 <rect x="1163.2" y="169.3" width="3.7" height="3.3" fill="#00838f" stroke="none"/>
 <path d="M1168.2 169.4H1169.9L1168.4 172.6Z" fill="#00838f" stroke="none"/>
</g>
<!-- Archive Document -->
<g stroke="#00838f" stroke-width="1.15" stroke-linecap="butt">
 <path d="M1406 157.1H1413.8L1409.9 159.6Z" fill="#00838f" stroke-width="0.5"/>
 <path d="M1406 158.6L1409.9 161L1410.8 160.6V162.9H1406Z" fill="#00838f" stroke-width="0.5"/>
 <path d="M1415.2 158.3H1421.7V172.4H1410.4V164.3"/>
 <rect x="1412.4" y="160.3" width="7.3" height="4.1"/>
 <rect x="1412.4" y="166.2" width="7.3" height="4.1"/>
 <path d="M1415.2 162.4H1416.8M1415.2 168.3H1416.8" stroke-width="1.2"/>
</g>
<!-- pin icons -->
<g stroke="#00838f" stroke-width="1.05">
 <path d="M1747 172.7L1752.2 167.6M1753.6 168.6L1749.2 164.4L1750.4 163.3H1753.5L1756.5 160.6L1757.1 158.1L1762 162.6L1760.6 163.4L1758.2 164.5"/>
 <circle cx="1758.6" cy="169.4" r="3.2"/>
 <path d="M1756.4 167.1L1760.8 171.6"/>
</g>
<g stroke="#00838f" stroke-width="1.05" transform="translate(-424.6 443.7)">
 <path d="M1747 172.7L1752.2 167.6M1753.6 168.6L1749.2 164.4L1750.4 163.3H1753.5L1756.5 160.6L1757.1 158.1L1762 162.6L1760.6 163.4L1758.2 164.5"/>
 <circle cx="1758.6" cy="169.4" r="3.2"/>
 <path d="M1756.4 167.1L1760.8 171.6"/>
</g>
<!-- Lines: copilot icon -->
<g stroke="#00838f" stroke-width="1.2">
 <path d="M172.9 560.4H166.4Q165 560.4 164.6 561.8L163.3 568.2Q162.9 570.7 165.2 570.7H168.2Q169.6 570.7 170 569.3L172.9 560.4H173.4Q175 560.4 175 562V563"/>
 <path d="M169.1 573.6H175.6Q177 573.6 177.4 572.2L178.7 565.8Q179.1 563.2 176.8 563.2H173.8Q172.4 563.2 172 564.6L169.1 573.6H168.6Q167 573.6 167 572V571"/>
</g>
<!-- New Line (disabled) -->
<g stroke="#a2a2a2" stroke-width="1.05" stroke-linecap="butt">
 <path d="M80.2 603.4H83.7V605.8M83.7 612.2V614.6H80.2"/>
 <path d="M80.2 607.3H86.8L87.8 608.6V610.7H80.2Z" fill="#a2a2a2" stroke="none"/>
 <path d="M87.4 604.5H95.4M91.4 600.6V608.4M88.6 601.7L94.2 607.3M94.2 601.7L88.6 607.3" stroke-width="0.9"/>
 <circle cx="91.4" cy="604.5" r="1.3" fill="#f5f7f9" stroke="none"/>
</g>
<!-- Delete Line (disabled) -->
<g stroke="#a2a2a2" stroke-width="1.05" stroke-linecap="butt">
 <path d="M183.2 603.4H186.7V605.8M186.7 612.2V614.6H183.2"/>
 <path d="M183.2 607.3H188L189.8 609L188 610.7H183.2Z" fill="#a2a2a2" stroke="none"/>
 <path d="M189.6 604.9L198.4 613.3" stroke-width="1.6" stroke-linecap="round"/>
 <path d="M197.6 605.6L189.2 613" stroke-width="2.4" stroke-linecap="round"/>
</g>
<!-- Select items -->
<g stroke="#00838f" stroke-width="1.1" stroke-linecap="butt">
 <circle cx="302.4" cy="604.5" r="1.2"/>
 <path d="M302.4 601.2V602.6M302.4 606.4V607.8M299.1 604.5H300.5M304.3 604.5H305.7M300.2 602.3L300.9 603M303.9 606L304.6 606.7M300.2 606.7L300.9 606M303.9 603L304.6 602.3"/>
 <path d="M300 607.6L301.4 608.8L304 608.6L306.4 607.2H307.9V614.8H300Z" fill="#00838f" stroke="none"/>
 <rect x="302.9" y="611.2" width="4.1" height="1.7" fill="#fff" stroke="none"/>
 <path d="M306.2 602.1H312.8V610.7L309.1 614.8V605.6H307.1Z" fill="#00838f" stroke="none"/>
 <path d="M309 605.9L312.1 602.9" stroke="#fff" stroke-width="0.9"/>
</g>
<!-- Suggest: sparkles -->
<path d="M436 602.4Q436.6 606.3 440.5 606.9Q436.6 607.5 436 611.4Q435.4 607.5 431.5 606.9Q435.4 606.3 436 602.4Z" fill="#00838f" stroke="#00838f" stroke-width="1.2"/>
<path d="M441.6 609.4Q442 612.2 444.8 612.6Q442 613 441.6 615.8Q441.2 613 438.4 612.6Q441.2 612.2 441.6 609.4Z" fill="#00838f" stroke="#00838f" stroke-width="1"/>
<!-- Lines right icons -->
<g stroke="#00838f" stroke-width="1.1">
 <path d="M1288.4 563.4V572.6H1299.8V570.7"/>
 <path d="M1291.2 569.4C1291.6 564.8 1294.6 562.5 1298.4 562.3V559.6L1303.5 564.7L1298.4 569.6V566.8C1295.4 566.7 1293.2 567.4 1291.2 569.4Z"/>
 <path d="M1330.8 561.5H1323.5V572.5H1336.5V566.8M1323.5 568.4H1329.6V572.5M1330.6 566.9L1336.6 561.3M1332.8 561.2H1336.7V565" stroke-linecap="butt"/>
</g>
<!-- row arrow + kebab -->
<path d="M73 703H85.2M81 698.8L85.3 703L81 707.2" stroke="#444" stroke-width="1"/>
<g fill="#333"><rect x="238.2" y="697.3" width="1.6" height="1.6"/><rect x="238.2" y="702.6" width="1.6" height="1.6"/><rect x="238.2" y="708.9" width="1.6" height="1.6"/></g>
<!-- teal dashes in row -->
<path d="M1089.2 708.9H1096.8M1117.9 708.9H1125.7M1311.5 708.9H1319.1" stroke="#00838f" stroke-width="1.4" stroke-linecap="butt"/>
<!-- scrollbar arrows -->
<path d="M1369 199L1372.5 195.2L1376 199Z" fill="#505050"/>
<path d="M1758.8 243L1762.5 239L1766.2 243Z" fill="#b4b4b4"/>
<path d="M77.4 779V786L73.2 782.5Z" fill="#a3a3a3"/>
<path d="M1336 779V786L1340.4 782.5Z" fill="#505050"/>
<!-- details (i) + paperclip -->
<g stroke="#505c6d">
 <circle cx="1430.4" cy="208.55" r="7" stroke-width="1"/>
 <path d="M1430.4 207.1V211.6" stroke-width="1.1" stroke-linecap="butt"/>
 <circle cx="1430.4" cy="205.1" r="0.7" fill="#505c6d" stroke="none"/>
 <path d="M1535.8 204.6V212.9Q1535.8 216.4 1532.8 216.4Q1529.9 216.4 1529.9 212.9V204.2Q1529.9 201.5 1532.2 201.5Q1534.4 201.5 1534.4 204.2V212.6Q1534.4 214.4 1532.9 214.4Q1531.4 214.4 1531.4 212.6V205.2" stroke-width="0.95" stroke="#69727f"/>
</g>
</svg>

</body></html>
